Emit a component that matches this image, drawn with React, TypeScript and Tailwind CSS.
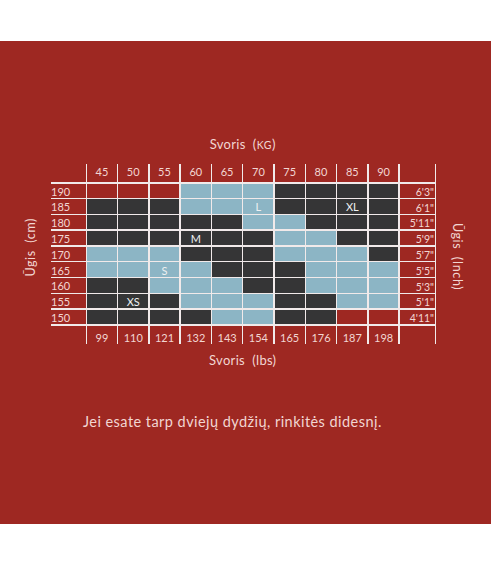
const kg = [45, 50, 55, 60, 65, 70, 75, 80, 85, 90]
const lbs = [99, 110, 121, 132, 143, 154, 165, 176, 187, 198]

// R = no fill, B = blue, D = dark
const rows = [
  { cm: 190, inch: "6'3\"", cells: "RRRBBBDDDD", marks: {} as Record<number, string> },
  { cm: 185, inch: "6'1\"", cells: "DDDBBBDDDD", marks: { 5: "L", 8: "XL" } as Record<number, string> },
  { cm: 180, inch: "5'11\"", cells: "DDDDDBBDDD", marks: {} as Record<number, string> },
  { cm: 175, inch: "5'9\"", cells: "DDDDDDBBDD", marks: { 3: "M" } as Record<number, string> },
  { cm: 170, inch: "5'7\"", cells: "BBBDDDBBBD", marks: {} as Record<number, string> },
  { cm: 165, inch: "5'5\"", cells: "BBBBDDDBBB", marks: { 2: "S" } as Record<number, string> },
  { cm: 160, inch: "5'3\"", cells: "DDBBBDDBBB", marks: {} as Record<number, string> },
  { cm: 155, inch: "5'1\"", cells: "DDDBBBDDBB", marks: { 1: "XS" } as Record<number, string> },
  { cm: 150, inch: "4'11\"", cells: "DDDDBBDDRR", marks: {} as Record<number, string> },
]

const fill: Record<string, string> = {
  R: "bg-[#9e2822]",
  B: "bg-[#8cb5c5]",
  D: "bg-[#353536]",
}

function SizeGrid() {
  return (
    <div className="grid grid-cols-[34.5px_repeat(10,29.8px)_35px] grid-rows-[18px_repeat(9,14.3px)_18.5px] gap-[1.5px] bg-[#f1eaea] text-[11px] leading-none text-[#f2d6d2]">
      {/* header */}
      <div className="bg-[#9e2822]" />
      {kg.map((k) => (
        <div key={k} className="flex justify-center bg-[#9e2822] pt-[2px]">
          {k}
        </div>
      ))}
      <div className="bg-[#9e2822]" />

      {/* body */}
      {rows.map((row) => (
        <div key={row.cm} className="contents">
          <div className="flex items-center bg-[#9e2822] pt-[1px]">{row.cm}</div>
          {row.cells.split("").map((c, i) => (
            <div
              key={i}
              className={`flex items-center justify-center pt-[1px] text-[#eef0f1] ${fill[c]}`}
            >
              {row.marks[i] ?? ""}
            </div>
          ))}
          <div className="flex items-center justify-end bg-[#9e2822] pt-[3px] pr-[1px] text-[10.5px]">
            {row.inch}
          </div>
        </div>
      ))}

      {/* footer */}
      <div className="bg-[#9e2822]" />
      {lbs.map((l) => (
        <div key={l} className="flex items-end justify-center bg-[#9e2822] pb-[1px]">
          {l}
        </div>
      ))}
      <div className="bg-[#9e2822]" />
    </div>
  )
}

export default function App() {
  return (
    <div className="min-h-[566px] w-[492px] bg-white pt-[41px] font-['Lato',sans-serif]">
      <section className="flex h-[483px] w-[491px] flex-col bg-[#9e2822] text-[#f2d6d2]">
        <div className="flex pt-[95px]">
          {/* left axis label */}
          <div className="flex w-[51px] items-start justify-center pt-[82px] pl-[12px]">
            <span className="rotate-180 text-[12.5px] tracking-[0.6px] [writing-mode:vertical-rl]">
              Ūgis&nbsp; (cm)
            </span>
          </div>

          <div className="flex w-[384.5px] flex-col">
            <div className="pl-[36px] pr-[37px] text-center text-[13px] leading-4 tracking-[0.3px]">
              Svoris&nbsp; (<span className="text-[10.5px] tracking-[0.6px]">KG</span>)
            </div>
            <div className="mt-[11px]">
              <SizeGrid />
            </div>
            <div className="mt-[8px] pl-[36px] pr-[37px] text-center text-[13px] leading-4 tracking-[0.3px]">
              Svoris&nbsp; (lbs)
            </div>
          </div>

          {/* right axis label */}
          <div className="flex flex-1 items-start justify-center pt-[87px] pr-[14px]">
            <span className="text-[12.5px] tracking-[0.6px] [writing-mode:vertical-rl]">
              Ūgis&nbsp; (Inch)
            </span>
          </div>
        </div>

        <p className="mt-[44px] pl-[83px] text-[14.5px] leading-5 tracking-[0.45px]">
          Jei esate tarp dviejų dydžių, rinkitės didesnį.
        </p>
      </section>
    </div>
  )
}
